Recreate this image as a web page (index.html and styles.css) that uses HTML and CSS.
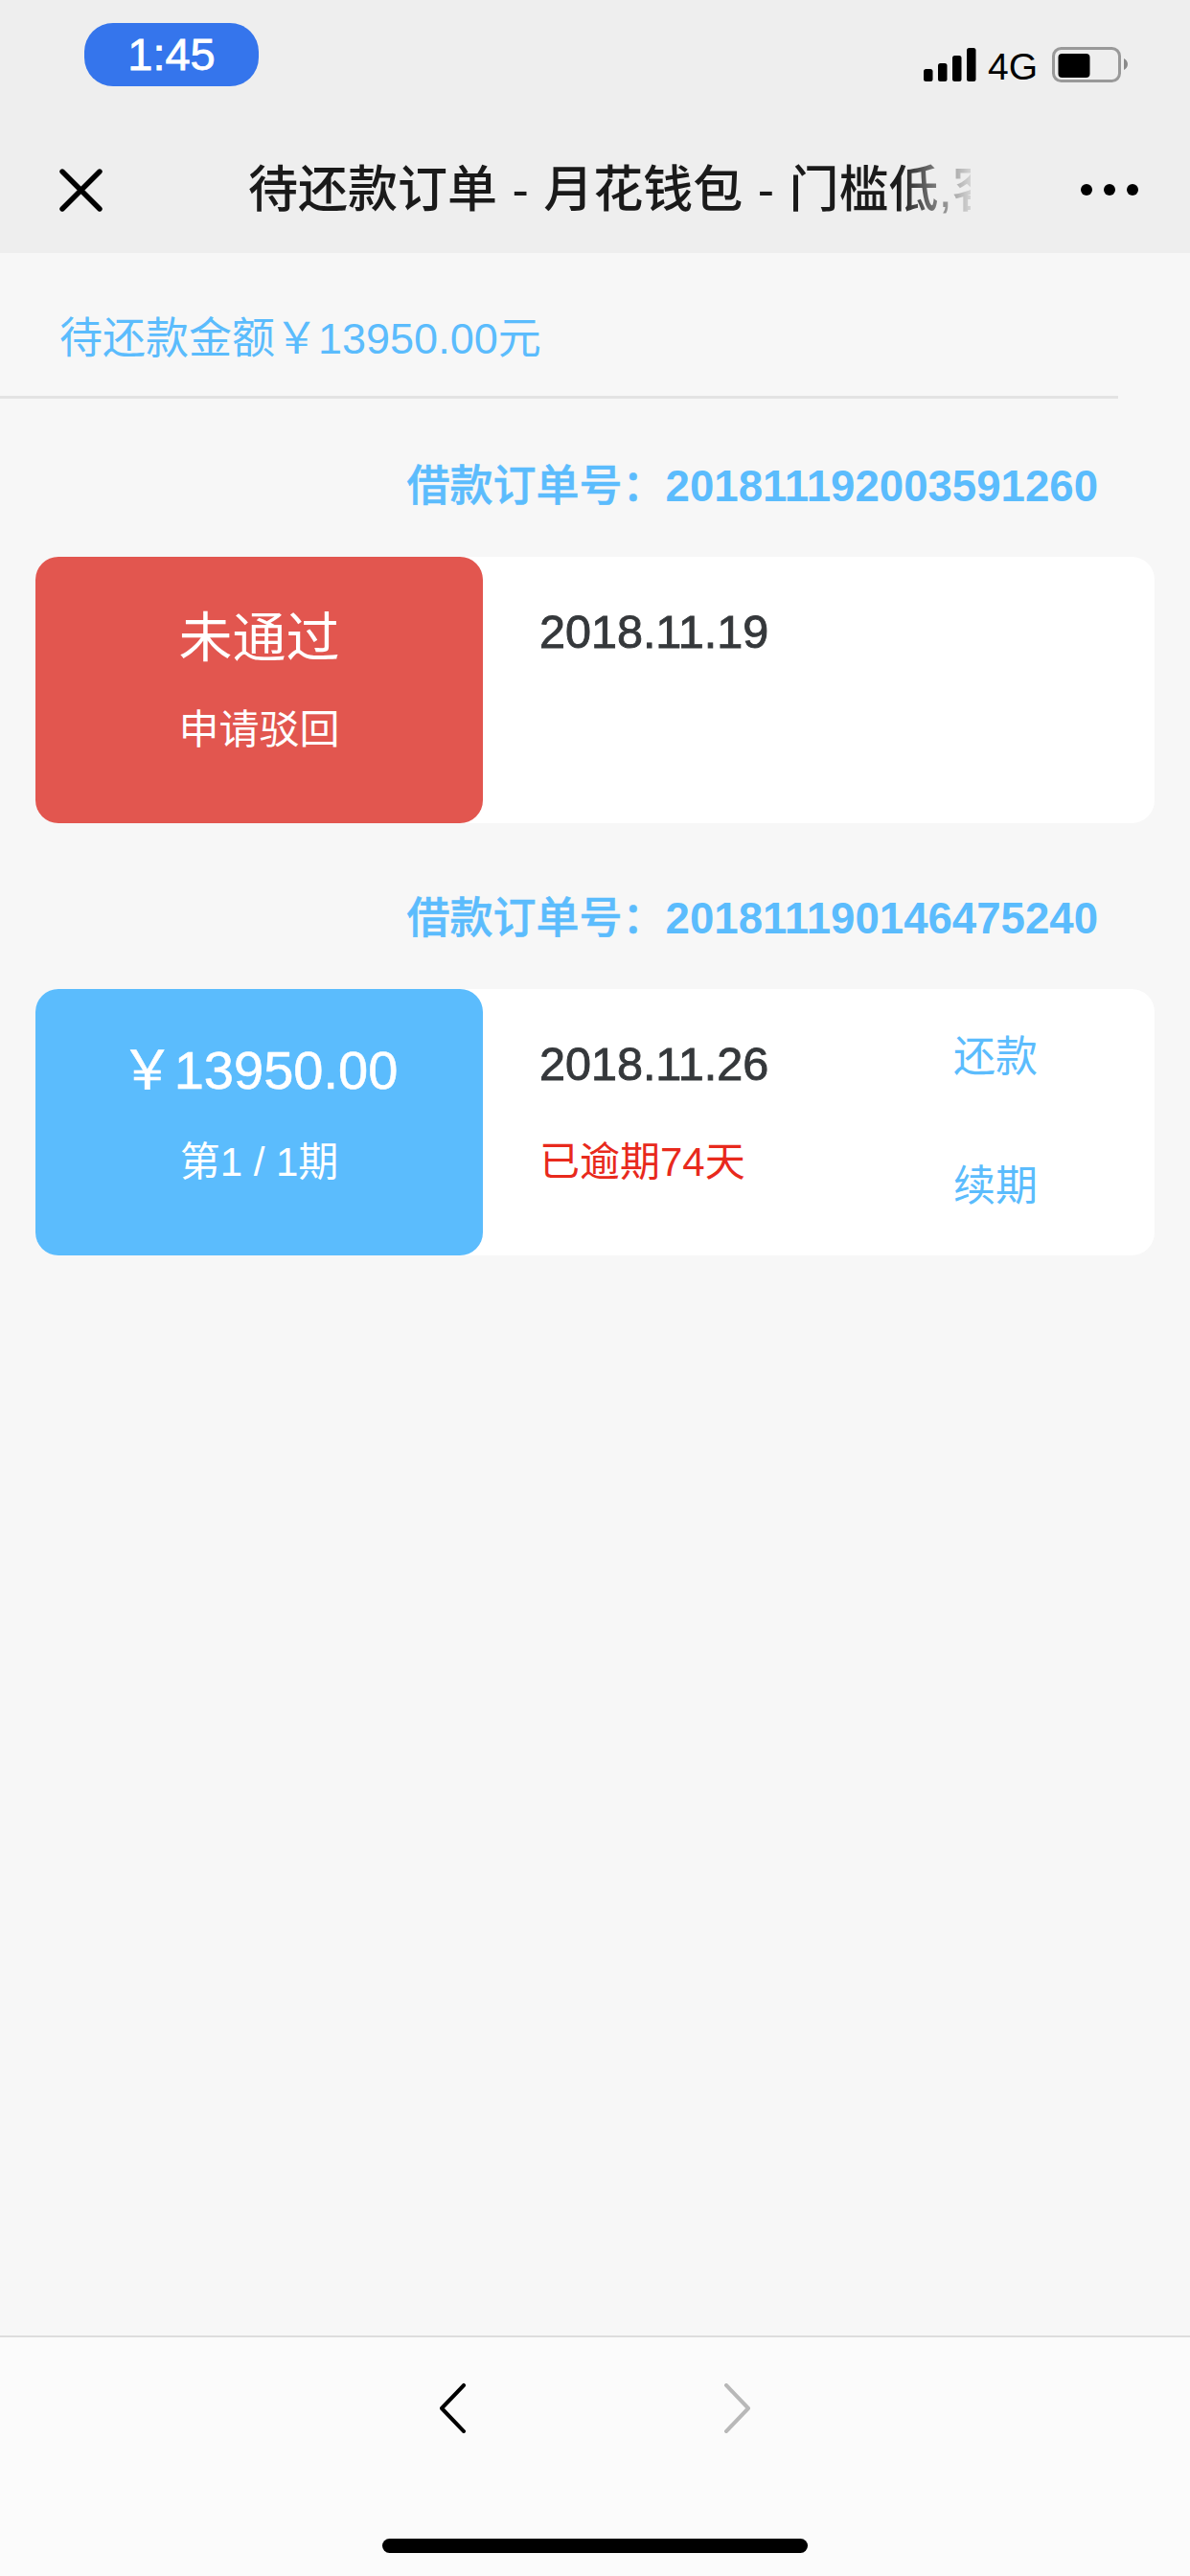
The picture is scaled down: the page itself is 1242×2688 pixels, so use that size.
FILE: index.html
```html
<!DOCTYPE html>
<html lang="zh-CN">
<head>
<meta charset="utf-8">
<title>待还款订单</title>
<link rel="stylesheet" href="styles.css">
</head>
<body>
<div class="page">
  <header class="top">
    <div class="status">
      <div class="time">1:45</div>
      <div class="indicators">
        <svg class="signal" width="55" height="36" viewBox="0 0 55 36">
          <rect x="0" y="22" width="9.5" height="13" rx="2.5"/>
          <rect x="15" y="16" width="9.5" height="19" rx="2.5"/>
          <rect x="30" y="8" width="9.5" height="27" rx="2.5"/>
          <rect x="45" y="0" width="9.5" height="35" rx="2.5"/>
        </svg>
        <span class="net">4G</span>
        <svg class="battery" width="80" height="38" viewBox="0 0 80 38">
          <rect x="1.5" y="1.5" width="69" height="34" rx="8" fill="none" stroke="#999" stroke-width="3"/>
          <rect x="6.5" y="7" width="33" height="25" rx="4" fill="#000"/>
          <path d="M75 12c2 1 4 3 4 6s-2 5-4 6z" fill="#8a8a8a"/>
        </svg>
      </div>
    </div>
    <nav class="navbar">
      <svg class="close" width="45" height="45" viewBox="0 0 45 45"><path d="M3 3L42 42M42 3L3 42" stroke="#000" stroke-width="5.4" stroke-linecap="round"/></svg>
      <div class="title">待还款订单 - 月花钱包 - 门槛低,客</div>
      <div class="more"><i></i><i></i><i></i></div>
    </nav>
  </header>

  <main class="main">
    <div class="summary">待还款金额￥13950.00元</div>
    <div class="orders">
      <section class="order">
        <div class="order-no"><span class="order-label">借款订单号：</span><b class="order-num">201811192003591260</b></div>
        <div class="card">
          <div class="badge badge-red">
            <div class="badge-main">未通过</div>
            <div class="badge-sub">申请驳回</div>
          </div>
          <div class="info">
            <div class="date">2018.11.19</div>
          </div>
        </div>
      </section>
      <section class="order">
        <div class="order-no"><span class="order-label">借款订单号：</span><b class="order-num">201811190146475240</b></div>
        <div class="card">
          <div class="badge badge-blue">
            <div class="badge-main">￥13950.00</div>
            <div class="badge-sub">第1 / 1期</div>
          </div>
          <div class="info">
            <div class="date">2018.11.26</div>
            <div class="overdue">已逾期74天</div>
          </div>
          <div class="actions">
            <a class="action">还款</a>
            <a class="action">续期</a>
          </div>
        </div>
      </section>
    </div>
  </main>

  <footer class="toolbar">
    <div class="arrows">
      <svg width="28" height="52" viewBox="0 0 28 52"><path d="M26 2L3 26L26 50" fill="none" stroke="#000" stroke-width="4" stroke-linecap="square" stroke-linejoin="round"/></svg>
      <svg width="28" height="52" viewBox="0 0 28 52"><path d="M2 2L25 26L2 50" fill="none" stroke="#b8b8b8" stroke-width="4" stroke-linecap="square" stroke-linejoin="round"/></svg>
    </div>
    <div class="home"></div>
  </footer>
</div>
</body>
</html>
```
FILE: styles.css
```css
* { box-sizing: border-box; }
html, body { margin: 0; padding: 0; }
body {
  font-family: "Liberation Sans", "Noto Sans CJK SC", sans-serif;
  background: #f7f7f7;
}
.page {
  width: 1242px;
  height: 2688px;
  display: flex;
  flex-direction: column;
  overflow: hidden;
}

/* top chrome */
.top { height: 264px; background: #eeeeee; }
.status {
  height: 132px;
  display: flex;
  justify-content: space-between;
  padding: 24px 64px 0 88px;
}
.time {
  width: 182px;
  height: 66px;
  border-radius: 30px;
  background: #3575ec;
  color: #fff;
  font-size: 47px;
  line-height: 66px;
  text-align: center;
  -webkit-text-stroke: 0.8px #fff;
}
.indicators { display: flex; align-items: flex-start; padding-top: 26px; }
.signal { fill: #000; display: block; }
.net { font-size: 39px; line-height: 36px; margin: 2px 0 0 12px; color: #000; }
.battery { display: block; margin: 0 0 0 15px; transform: translateY(-1px); }
.navbar {
  height: 132px;
  display: flex;
  align-items: center;
  padding: 0 54px 0 62px;
}
.close { flex: none; }
.title {
  width: 754px;
  margin-left: 152px;
  flex: none;
  font-size: 52px;
  font-weight: 500;
  word-spacing: 1px;
  line-height: 70px;
  color: #1a1a1a;
  white-space: nowrap;
  overflow: hidden;
  -webkit-mask-image: linear-gradient(90deg, #000 0, #000 90%, rgba(0, 0, 0, 0.12) 100%);
  mask-image: linear-gradient(90deg, #000 0, #000 90%, rgba(0, 0, 0, 0.12) 100%);
}
.more { display: flex; gap: 12px; margin-left: auto; }
.more i { width: 12px; height: 12px; border-radius: 50%; background: #000; }

/* content */
.main { flex: 1; }
.summary {
  margin-right: 75px;
  padding: 60px 0 29px 62px;
  border-bottom: 3px solid #e3e3e3;
  font-size: 45px;
  line-height: 60px;
  color: #5bbcfd;
}
.orders {
  display: flex;
  flex-direction: column;
  gap: 70px;
  padding: 62px 37px 0;
}
.order-no {
  height: 60px;
  line-height: 60px;
  margin-bottom: 43px;
  padding-right: 59px;
  text-align: right;
  color: #5bbcfd;
}
.order-label {
  font-size: 45px;
  font-weight: 500;
  -webkit-text-stroke: 0.5px #5bbcfd;
}
.order-num { font-size: 45.6px; font-weight: 700; }
.card {
  height: 278px;
  display: flex;
  background: #fff;
  border-radius: 24px;
}
.badge {
  width: 467px;
  flex: none;
  border-radius: 24px;
  color: #fff;
  text-align: center;
  padding-top: 53px;
}
.badge-red { background: #e2564f; }
.badge-blue { background: #5bbcfd; }
.badge-main { font-size: 56px; line-height: 64px; }
.badge-blue .badge-main { -webkit-text-stroke: 0.6px #fff; }
.badge-sub { font-size: 42px; line-height: 50px; margin-top: 39px; }
.info { padding: 50px 0 0 59px; }
.date {
  font-size: 48.5px;
  line-height: 56px;
  color: #35383b;
  -webkit-text-stroke: 0.9px #35383b;
}
.overdue { font-size: 42px; line-height: 50px; margin-top: 50px; color: #e8291c; }
.actions {
  margin-left: auto;
  margin-right: 122px;
  padding-top: 46px;
  display: flex;
  flex-direction: column;
  gap: 85px;
}
.action { font-size: 44px; line-height: 50px; color: #5bbcfd; }

/* bottom toolbar */
.toolbar {
  height: 251px;
  flex: none;
  background: #fbfbfb;
  border-top: 2px solid #dddddd;
  padding-top: 48px;
}
.arrows { display: flex; gap: 270px; padding-left: 458px; }
.arrows svg { display: block; }
.home {
  width: 444px;
  height: 15px;
  margin: 110px auto 0;
  border-radius: 8px;
  background: #000;
}
```
